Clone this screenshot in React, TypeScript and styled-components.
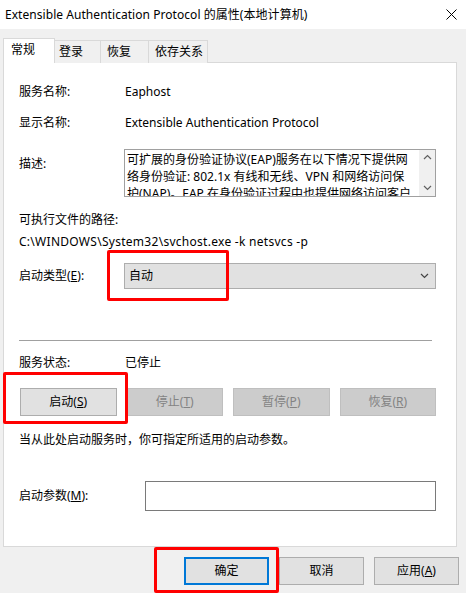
import React from "react";
import styled, { createGlobalStyle } from "styled-components";

const FONT = `"Noto Sans", "Noto Sans CJK SC", sans-serif`;

const Global = createGlobalStyle`
  html, body { margin: 0; padding: 0; background: #f0f0f0; }
  body { font-family: ${FONT}; font-size: 12px; color: #000; }
  * { box-sizing: border-box; }
`;

const Window = styled.div`
  position: relative;
  width: 466px;
  height: 593px;
  background: #f0f0f0;
  overflow: hidden;
  display: flex;
  flex-direction: column;
  font-family: ${FONT};
  font-size: 12px;
  line-height: 16px;
  color: #000;
`;

const TitleBar = styled.div`
  height: 29px;
  background: #fff;
  display: flex;
  align-items: center;
  justify-content: space-between;
  padding-left: 5px;
  flex-shrink: 0;
`;

const Title = styled.div`
  line-height: 16px;
  letter-spacing: 0.05px;
`;

const CloseBtn = styled.div`
  width: 29px;
  height: 29px;
  display: flex;
  align-items: center;
  justify-content: center;
`;

const TabBar = styled.div`
  margin-top: 9px;
  height: 25px;
  padding-left: 3px;
  display: flex;
  align-items: flex-end;
  flex-shrink: 0;
`;

const Tab = styled.div<{ $active?: boolean; $w: number; $pad: number }>`
  position: relative;
  z-index: ${(p) => (p.$active ? 2 : 1)};
  width: ${(p) => p.$w}px;
  height: ${(p) => (p.$active ? 25 : 23)}px;
  margin-left: ${(p) => (p.$active ? 0 : -1)}px;
  padding-left: ${(p) => p.$pad}px;
  padding-top: 3px;
  background: ${(p) => (p.$active ? "#fff" : "#f0f0f0")};
  border: 1px solid #d9d9d9;
  border-bottom: none;
  white-space: nowrap;
  &:first-child { margin-left: 0; }
`;

const Panel = styled.div`
  position: relative;
  margin-top: -1px;
  margin-left: 3px;
  width: 454px;
  height: 485px;
  background: #fff;
  border: 1px solid #d9d9d9;
  padding: 0 20px 0 15px;
  display: flex;
  flex-direction: column;
  flex-shrink: 0;
`;

const Row = styled.div<{ $mt: number; $align?: string }>`
  margin-top: ${(p) => p.$mt}px;
  display: flex;
  align-items: ${(p) => p.$align || "center"};
`;

const Label = styled.div<{ $w?: number; $mt?: number }>`
  width: ${(p) => p.$w ?? 105}px;
  flex-shrink: 0;
  margin-top: ${(p) => p.$mt ?? 0}px;
  white-space: nowrap;
`;

const Value = styled.div`
  padding-left: 1px;
  white-space: nowrap;
`;

const Line = styled.div<{ $mt: number; $ls?: number }>`
  margin-top: ${(p) => p.$mt}px;
  letter-spacing: ${(p) => p.$ls ?? 0}px;
  white-space: nowrap;
`;

const DescBox = styled.div`
  position: relative;
  width: 312px;
  height: 48px;
  border: 1px solid #a0a0a0;
  background: #fff;
  overflow: hidden;
  display: flex;
`;

const DescText = styled.div`
  flex: 1;
  padding: 1px 0 0 2px;
  line-height: 17px;
  overflow: hidden;
  white-space: nowrap;
`;

const ScrollBar = styled.div`
  width: 16px;
  background: #f0f0f0;
  display: flex;
  flex-direction: column;
  justify-content: space-between;
  align-items: center;
  padding: 4px 0 5px;
`;

const Combo = styled.div`
  width: 312px;
  height: 26px;
  background: #e1e1e1;
  border: 1px solid #adadad;
  display: flex;
  align-items: center;
  justify-content: space-between;
  padding: 0 6px 0 4px;
`;

const Separator = styled.div<{ $mt: number }>`
  margin-top: ${(p) => p.$mt}px;
  height: 1px;
  margin-right: 4px;
  background: #a0a0a0;
`;

const ButtonGrid = styled.div<{ $mt: number }>`
  margin-top: ${(p) => p.$mt}px;
  margin-left: 1px;
  display: grid;
  grid-template-columns: repeat(4, 1fr);
  column-gap: 10px;
`;

const Button = styled.div<{ $disabled?: boolean; $default?: boolean; $w?: number }>`
  height: 28px;
  ${(p) => (p.$w ? `width: ${p.$w}px;` : "")}
  display: flex;
  align-items: center;
  justify-content: center;
  background: ${(p) => (p.$disabled ? "#cccccc" : "#e1e1e1")};
  border: ${(p) =>
    p.$default ? "2px solid #0078d7" : p.$disabled ? "1px solid #bfbfbf" : "1px solid #adadad"};
  color: ${(p) => (p.$disabled ? "#838383" : "#000")};
  white-space: nowrap;
`;

const Input = styled.div`
  width: 291px;
  height: 30px;
  border: 1px solid #7a7a7a;
  background: #fff;
`;

const Footer = styled.div`
  margin-top: 10px;
  padding-right: 7px;
  display: flex;
  justify-content: flex-end;
  gap: 10px;
`;

const Highlight = styled.div<{ $x: number; $y: number; $w: number; $h: number }>`
  position: absolute;
  left: ${(p) => p.$x}px;
  top: ${(p) => p.$y}px;
  width: ${(p) => p.$w}px;
  height: ${(p) => p.$h}px;
  border: 3px solid #ff0000;
  border-radius: 2px;
  pointer-events: none;
  z-index: 10;
`;

const Chevron = ({ up, color = "#606060" }: { up?: boolean; color?: string }) => (
  <svg width="9" height="6" viewBox="0 0 9 6">
    <path
      d={up ? "M1 5 L4.5 1.5 L8 5" : "M1 1 L4.5 4.5 L8 1"}
      fill="none"
      stroke={color}
      strokeWidth="1.2"
    />
  </svg>
);

export default function App() {
  return (
    <>
      <Global />
      <Window>
        <TitleBar>
          <Title>Extensible Authentication Protocol 的属性(本地计算机)</Title>
          <CloseBtn>
            <svg width="11" height="11" viewBox="0 0 11 11">
              <path d="M0.5 0.5 L10.5 10.5 M10.5 0.5 L0.5 10.5" stroke="#000" strokeWidth="1" />
            </svg>
          </CloseBtn>
        </TitleBar>
        <TabBar>
          <Tab $active $w={52} $pad={7}>常规</Tab>
          <Tab $w={47} $pad={4}>登录</Tab>
          <Tab $w={49} $pad={6}>恢复</Tab>
          <Tab $w={60} $pad={6}>依存关系</Tab>
        </TabBar>
        <Panel>
          <Row $mt={21}>
            <Label>服务名称:</Label>
            <Value>Eaphost</Value>
          </Row>
          <Row $mt={15}>
            <Label>显示名称:</Label>
            <Value>Extensible Authentication Protocol</Value>
          </Row>
          <Row $mt={18} $align="flex-start">
            <Label $mt={7}>描述:</Label>
            <DescBox>
              <DescText>
                <div>可扩展的身份验证协议(EAP)服务在以下情况下提供网</div>
                <div>络身份验证: 802.1x 有线和无线、VPN 和网络访问保</div>
                <div>护(NAP)。EAP 在身份验证过程中也提供网络访问客户</div>
              </DescText>
              <ScrollBar>
                <Chevron up />
                <Chevron />
              </ScrollBar>
            </DescBox>
          </Row>
          <Line $mt={15}>可执行文件的路径:</Line>
          <Line $mt={6} $ls={0.28}>C:\WINDOWS\System32\svchost.exe -k netsvcs -p</Line>
          <Row $mt={13}>
            <Label>
              启动类型(<u>E</u>):
            </Label>
            <Combo>
              <span>自动</span>
              <Chevron color="#444" />
            </Combo>
          </Row>
          <Separator $mt={51} />
          <Row $mt={14}>
            <Label>服务状态:</Label>
            <Value>已停止</Value>
          </Row>
          <ButtonGrid $mt={17}>
            <Button>
              启动(<u>S</u>)
            </Button>
            <Button $disabled>
              停止(<u>T</u>)
            </Button>
            <Button $disabled>
              暂停(<u>P</u>)
            </Button>
            <Button $disabled>
              恢复(<u>R</u>)
            </Button>
          </ButtonGrid>
          <Line $mt={16}>当从此处启动服务时，你可指定所适用的启动参数。</Line>
          <Row $mt={33}>
            <Label $w={126}>
              启动参数(<u>M</u>):
            </Label>
            <Input />
          </Row>
        </Panel>
        <Footer>
          <Button $default $w={85}>确定</Button>
          <Button $w={85}>取消</Button>
          <Button $w={85}>
            应用(<u>A</u>)
          </Button>
        </Footer>
        <Highlight $x={107} $y={250} $w={122} $h={51} />
        <Highlight $x={3} $y={372} $w={125} $h={52} />
        <Highlight $x={154} $y={547} $w={125} $h={46} />
      </Window>
    </>
  );
}
